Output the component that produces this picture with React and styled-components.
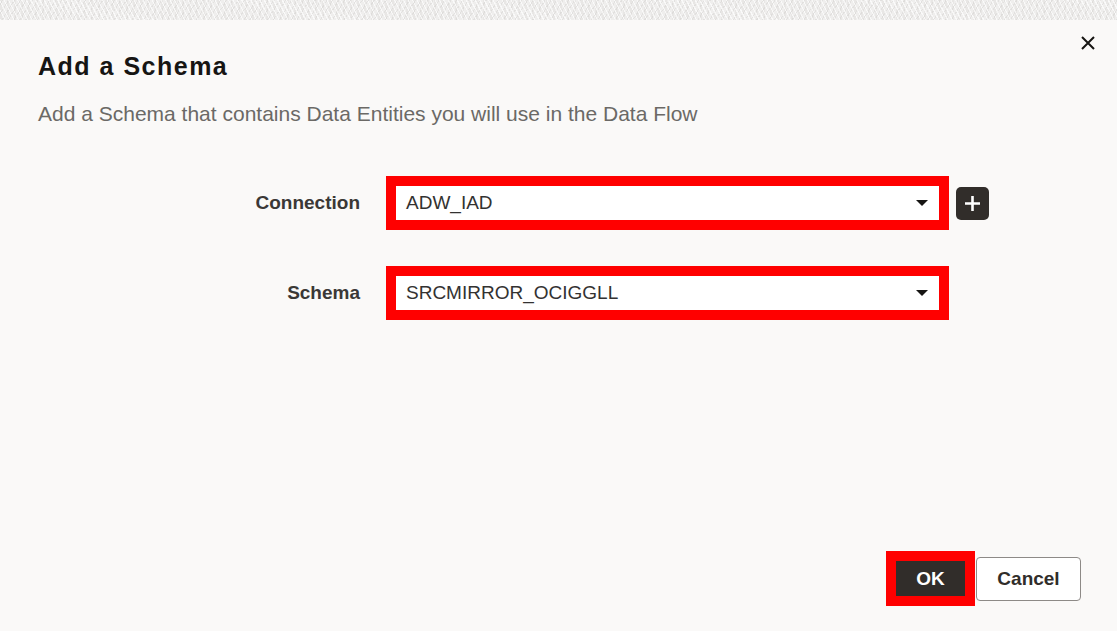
import React from 'react';
import styled, { createGlobalStyle } from 'styled-components';

const GlobalStyle = createGlobalStyle`
  html, body {
    margin: 0;
    padding: 0;
    background: #faf9f8;
    font-family: "Liberation Sans", Arial, sans-serif;
  }
`;

const Page = styled.div`
  display: flex;
  flex-direction: column;
  width: 1117px;
  height: 631px;
  overflow: hidden;
`;

// textured strip of the page behind the dialog
const Backdrop = styled.div`
  height: 20px;
  flex-shrink: 0;
  background-color: #efeeed;
  background-image:
    repeating-linear-gradient(63deg, rgba(255,255,255,0.7) 0 1px, transparent 1px 4px),
    repeating-linear-gradient(-58deg, rgba(210,208,206,0.45) 0 1px, transparent 1px 5px),
    repeating-linear-gradient(90deg, rgba(225,223,221,0.5) 0 2px, transparent 2px 7px);
`;

const Dialog = styled.div`
  flex: 1;
  display: flex;
  flex-direction: column;
  background: #faf9f8;
`;

const Header = styled.div`
  display: flex;
  justify-content: space-between;
  align-items: flex-start;
  padding: 0 21px 0 38px;
`;

const Title = styled.h1`
  margin: 31px 0 0;
  font-size: 25px;
  line-height: 30px;
  font-weight: 700;
  letter-spacing: 1.5px;
  color: #161513;
`;

const CloseButton = styled.button`
  margin-top: 15px;
  width: 16px;
  height: 16px;
  padding: 0;
  border: 0;
  background: none;
  display: flex;
  cursor: pointer;
`;

const Subtitle = styled.p`
  margin: 21px 0 0;
  padding-left: 38px;
  font-size: 21px;
  line-height: 24px;
  color: #6b6966;
`;

const Form = styled.div`
  display: grid;
  grid-template-columns: 386px auto auto;
  row-gap: 36px;
  align-items: center;
  justify-content: start;
  margin-top: 50px;
`;

const Label = styled.label`
  justify-self: end;
  margin-right: 26px;
  font-size: 19px;
  font-weight: 700;
  color: #3a3836;
`;

const Highlight = styled.div`
  display: flex;
  border: 10px solid #ff0000;
`;

const Select = styled.div`
  width: ${({ $width }) => $width}px;
  height: 34px;
  box-sizing: border-box;
  padding: 0 11px 0 10px;
  display: flex;
  align-items: center;
  justify-content: space-between;
  background: #ffffff;
  font-size: 19px;
  color: #333231;
`;

const Caret = styled.span`
  width: 0;
  height: 0;
  border-left: 6px solid transparent;
  border-right: 6px solid transparent;
  border-top: 6px solid #161513;
`;

const AddButton = styled.button`
  margin-left: 7px;
  width: 33px;
  height: 33px;
  padding: 0;
  border: 0;
  border-radius: 5px;
  background: #312d2a;
  display: flex;
  align-items: center;
  justify-content: center;
  cursor: pointer;
`;

const Footer = styled.div`
  margin-top: auto;
  display: flex;
  justify-content: flex-end;
  align-items: center;
  gap: 1px;
  padding: 0 36px 25px 0;
`;

const PrimaryButton = styled.button`
  width: 69px;
  height: 35px;
  border: 0;
  padding: 0;
  background: #312d2a;
  color: #ffffff;
  font-family: inherit;
  font-size: 19px;
  font-weight: 700;
  cursor: pointer;
`;

const SecondaryButton = styled.button`
  width: 105px;
  height: 44px;
  box-sizing: border-box;
  border: 1px solid #8d8a87;
  border-radius: 4px;
  background: #ffffff;
  color: #312d2a;
  font-family: inherit;
  font-size: 19px;
  font-weight: 700;
  cursor: pointer;
`;

const fields = [
  { label: 'Connection', value: 'ADW_IAD', addable: true },
  { label: 'Schema', value: 'SRCMIRROR_OCIGGLL', addable: false },
];

const App = () => {
  return (
    <Page>
      <GlobalStyle />
      <Backdrop />
      <Dialog>
        <Header>
          <Title>Add a Schema</Title>
          <CloseButton aria-label="Close">
            <svg width="16" height="16" viewBox="0 0 16 16">
              <path d="M2 2 L14 14 M14 2 L2 14" stroke="#161513" strokeWidth="2" />
            </svg>
          </CloseButton>
        </Header>
        <Subtitle>Add a Schema that contains Data Entities you will use in the Data Flow</Subtitle>
        <Form>
          {fields.map((f) => (
            <React.Fragment key={f.label}>
              <Label>{f.label}</Label>
              <Highlight>
                <Select $width={543}>
                  <span>{f.value}</span>
                  <Caret />
                </Select>
              </Highlight>
              {f.addable ? (
                <AddButton aria-label="Add connection">
                  <svg width="19" height="19" viewBox="0 0 19 19">
                    <path d="M9.5 2 V17 M2 9.5 H17" stroke="#ffffff" strokeWidth="2.6" />
                  </svg>
                </AddButton>
              ) : (
                <span />
              )}
            </React.Fragment>
          ))}
        </Form>
        <Footer>
          <Highlight>
            <PrimaryButton>OK</PrimaryButton>
          </Highlight>
          <SecondaryButton>Cancel</SecondaryButton>
        </Footer>
      </Dialog>
    </Page>
  );
};

export default App;
